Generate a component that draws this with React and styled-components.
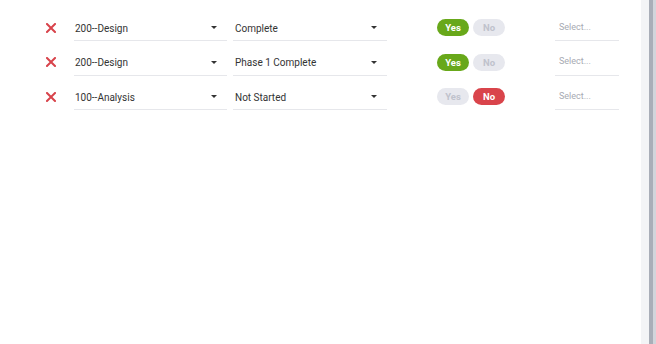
import React from "react";
import styled, { createGlobalStyle } from "styled-components";

const Global = createGlobalStyle`
  html, body { margin: 0; padding: 0; background: #fff; }
  body { font-family: Roboto, "Noto Sans", "Liberation Sans", sans-serif; }
`;

const Page = styled.div`
  display: flex;
  width: 656px;
  height: 344px;
  overflow: hidden;
  background: #fff;
`;

const Main = styled.div`
  flex: 1;
  padding: 16px 0 0 46px;
  display: flex;
  flex-direction: column;
  gap: 9.5px;
`;

const Track = styled.div`
  width: 15px;
  display: flex;
  background: #fafbfc;
`;

const TrackSide = styled.div`
  width: 8px;
  background: #f3f4f6;
`;

const Thumb = styled.div`
  width: 4px;
  background: #a9aeb8;
`;

const TrackEdge = styled.div`
  width: 3px;
  background: #d2d5db;
`;

const Row = styled.div`
  display: flex;
  align-items: center;
  height: 25px;
`;

const Remove = styled.button`
  width: 10px;
  height: 10px;
  padding: 0;
  border: 0;
  background: none;
  display: flex;
  margin: 0 18px 0 0;
  cursor: pointer;
  align-self: center;
  position: relative;
  top: -1px;
`;

const SelectBox = styled.div`
  width: ${(p) => p.$w}px;
  margin-right: ${(p) => p.$mr}px;
  height: 24px;
  border-bottom: 1px solid #e6e7eb;
  display: flex;
  align-items: center;
  justify-content: space-between;
  padding: 0 10px 0 ${(p) => p.$pl || 1}px;
  box-sizing: content-box;
  font-size: 10px;
  color: #333;
  align-self: flex-start;
`;

const Caret = styled.span`
  width: 0;
  height: 0;
  border-left: 3px solid transparent;
  border-right: 3px solid transparent;
  border-top: 3.5px solid #333;
  margin-top: -1px;
`;

const Placeholder = styled.div`
  width: 64px;
  height: 25px;
  border-bottom: 1px solid #e6e7eb;
  padding: 0 0 3px 4px;
  font-size: 9px;
  color: #a7aab3;
  display: flex;
  align-items: center;
  box-sizing: border-box;
  align-self: flex-start;
`;

const Toggle = styled.div`
  display: flex;
  gap: 4px;
  margin-right: 50px;
  position: relative;
  top: -1px;
`;

const Pill = styled.span`
  width: 32px;
  height: 17px;
  border-radius: 9px;
  display: flex;
  align-items: center;
  justify-content: center;
  font-size: 9.5px;
  font-weight: 700;
  background: ${(p) => (p.$on ? p.$color : "#e7e8ee")};
  color: ${(p) => (p.$on ? "#fff" : "#bfc2cc")};
`;

const rows = [
  { phase: "200--Design", status: "Complete", yes: true },
  { phase: "200--Design", status: "Phase 1 Complete", yes: true },
  { phase: "100--Analysis", status: "Not Started", yes: false },
];

const XIcon = () => (
  <svg width="10" height="10" viewBox="0 0 10 10">
    <path d="M1 1 L9 9 M9 1 L1 9" stroke="#d8434b" strokeWidth="2" strokeLinecap="square" />
  </svg>
);

export default function App() {
  return (
    <>
      <Global />
      <Page>
        <Main>
          {rows.map((r, i) => (
            <Row key={i}>
              <Remove aria-label="remove">
                <XIcon />
              </Remove>
              <SelectBox $w={142} $mr={6}>
                <span>{r.phase}</span>
                <Caret />
              </SelectBox>
              <SelectBox $w={142} $mr={50} $pl={2}>
                <span>{r.status}</span>
                <Caret />
              </SelectBox>
              <Toggle>
                <Pill $on={r.yes} $color="#68a81a">Yes</Pill>
                <Pill $on={!r.yes} $color="#d9444b">No</Pill>
              </Toggle>
              <Placeholder>Select...</Placeholder>
            </Row>
          ))}
        </Main>
        <Track>
          <TrackSide />
          <Thumb />
          <TrackEdge />
        </Track>
      </Page>
    </>
  );
}
